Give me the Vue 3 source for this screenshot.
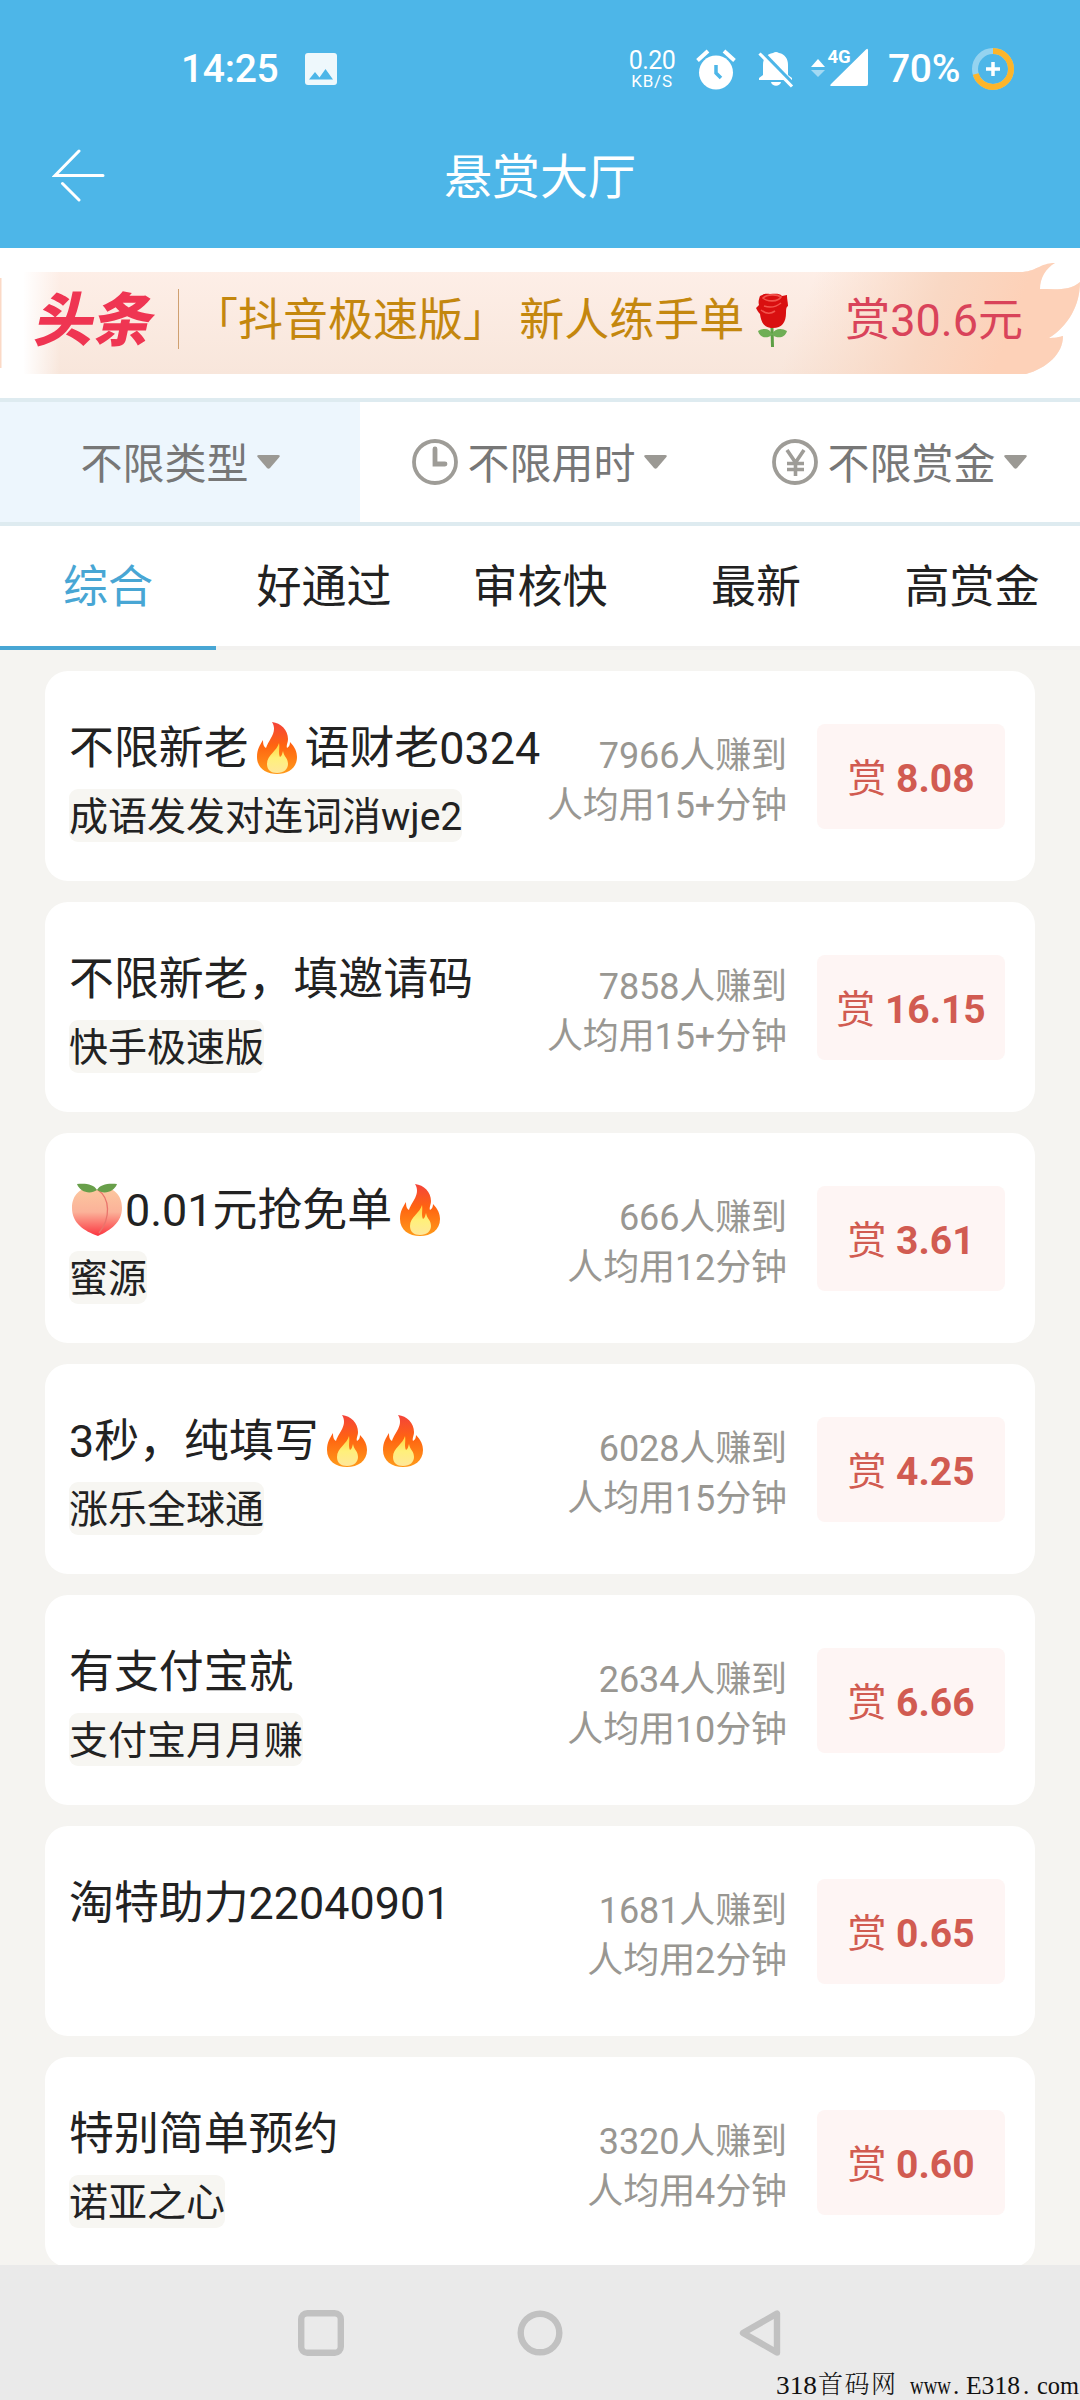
<script setup>
const filters = [
  { label: '不限类型', icon: '', active: true },
  { label: '不限用时', icon: 'clock' },
  { label: '不限赏金', icon: 'yen' },
]
const tabs = ['综合', '好通过', '审核快', '最新', '高赏金']
const tasks = [
  { title: ['不限新老', '@fire', '语财老0324'], sub: '成语发发对连词消wje2', count: '7966', time: '15+', price: '8.08' },
  { title: ['不限新老，填邀请码'], sub: '快手极速版', count: '7858', time: '15+', price: '16.15' },
  { title: ['@peach', '0.01元抢免单', '@fire'], sub: '蜜源', count: '666', time: '12', price: '3.61' },
  { title: ['3秒，纯填写', '@fire', '@fire'], sub: '涨乐全球通', count: '6028', time: '15', price: '4.25' },
  { title: ['有支付宝就'], sub: '支付宝月月赚', count: '2634', time: '10', price: '6.66' },
  { title: ['淘特助力22040901'], sub: '', count: '1681', time: '2', price: '0.65' },
  { title: ['特别简单预约'], sub: '诺亚之心', count: '3320', time: '4', price: '0.60' },
]
</script>

<template>
  <div class="screen">
    <svg class="defs" width="0" height="0" aria-hidden="true">
      <defs>
        <linearGradient id="fireOuter" x1="0" y1="0" x2="0" y2="1">
          <stop offset="0" stop-color="#f4433a" />
          <stop offset=".45" stop-color="#ff6411" />
          <stop offset="1" stop-color="#ff9a1a" />
        </linearGradient>
        <linearGradient id="fireInner" x1="0" y1="0" x2="0" y2="1">
          <stop offset="0" stop-color="#ffd23c" />
          <stop offset=".5" stop-color="#fff07a" />
          <stop offset="1" stop-color="#ffe79a" />
        </linearGradient>
        <linearGradient id="peachSkin" x1="0" y1="0" x2="0" y2="1">
          <stop offset="0" stop-color="#fcc8a0" />
          <stop offset=".5" stop-color="#fbb299" />
          <stop offset="1" stop-color="#fb3540" />
        </linearGradient>
        <symbol id="fire" viewBox="0 0 56 56">
          <path d="M23 2c9 1 16 8 16 17 0 4-2 6-1 9 2-1 3-3 3-6 5 5 7 10 7 15 0 11-9 17-20 17S8 48 8 37c0-8 3-12 6-17 0 5 1 7 3 8 3-9 12-16 6-26z" fill="url(#fireOuter)" />
          <path d="M30 23c-2 8-12 12-12 21 0 6 4 9 10 9 7 0 11-4 11-9 0-6-4-7-5-13-1 3-1 5-3 6-2-4 0-9-1-14z" fill="url(#fireInner)" />
        </symbol>
        <symbol id="peach" viewBox="0 0 56 56">
          <path d="M28 8c8-5 25-1 25 18 0 14-11 22-24 28C15 49 3 41 3 26 3 7 20 3 28 8z" fill="url(#peachSkin)" />
          <path d="M29 8c12 8 13 28 1 43" fill="none" stroke="#e9746c" stroke-width="1.300" />
          <path d="M28 8C21 13 11 10 8 2c8-1 17 0 20 6zM28 8c7 5 17 2 20-6-8-1-17 0-20 6z" fill="#689f4a" />
        </symbol>
        <symbol id="rose" viewBox="0 0 56 56">
          <path d="M26.500 36h3l.5 19h-3z" fill="#5d9f45" />
          <path d="M28 42c-2-6-9-6-14-3 2 7 9 8 14 4 6 4 13 3 15-4-5-3-12-3-15 3z" fill="#6fae55" />
          <path d="M16 4c5-3 7-2 10-2 5 0 9-1 12 2l5-1c0 5 1 7 1 11-2 1-2 4-2 7 0 9-4 15-13 15-10 0-12-7-13-14-2-2-3-4-4-6l3-3c-1-3 0-6 1-9z" fill="#d90f10" />
          <path d="M19 6c4-4 14-4 18-1-3 5-14 5-18 1zm1 8c6 2 12 1 17-3M17 18c5 4 10 4 14 1" fill="none" stroke="#f2544c" stroke-width="1.600" />
        </symbol>
        <symbol id="clock" viewBox="0 0 46 46">
          <circle cx="23" cy="23" r="21" fill="none" stroke="#9e9c97" stroke-width="3.800" />
          <path d="M23 10v15h10" fill="none" stroke="#9e9c97" stroke-width="4.800" stroke-linecap="round" />
        </symbol>
        <symbol id="yen" viewBox="0 0 46 46">
          <circle cx="23" cy="23" r="21" fill="none" stroke="#9e9c97" stroke-width="3.800" />
          <path d="M15 11l8.500 12.500L32 11M23.500 23v14M15 24.500h17M15 30.500h17" fill="none" stroke="#9e9c97" stroke-width="3.600" />
        </symbol>
      </defs>
    </svg>

    <header class="header">
      <div class="status">
        <span class="time">14:25</span>
        <svg class="pic" width="32" height="32" viewBox="0 0 32 32">
          <rect width="32" height="32" rx="3" fill="#eef8fc" />
          <path d="M4 26.500l6-7.500 4.500 5.500 6-8.500 7.500 10.500z" fill="#4db6e8" />
        </svg>
        <div class="speed"><b>0.20</b><i>KB/S</i></div>
        <svg class="alarm" width="40" height="41" viewBox="0 0 40 41">
          <circle cx="20" cy="23.500" r="17" fill="#fff" />
          <path d="M1.500 11.500L12 2M38.500 11.500L28 2" stroke="#fff" stroke-width="4" />
          <path d="M20 16v8l5 5" fill="none" stroke="#4db6e8" stroke-width="3.500" />
        </svg>
        <svg class="bell" width="36" height="37" viewBox="0 0 36 37">
          <path d="M5 24V14C5 7 9 3 15 2q3-2 6 0c6 1 9 6 9 12v10l4 3v2H1v-2z" fill="#fff" />
          <path d="M13 31h10c-1 5-9 5-10 0z" fill="#fff" />
          <path d="M3 0L36 34" stroke="#4db6e8" stroke-width="4" />
          <path d="M1.500 2.500L34 35.500" stroke="#fff" stroke-width="3.200" />
        </svg>
        <svg class="signal" width="58" height="42" viewBox="0 0 58 42">
          <path d="M0 19l7-8 7 8z" fill="#fff" />
          <path d="M0 22l7 7 7-7z" fill="#a3d9f3" />
          <path d="M55 1.500q2-2 2 1V36q0 2-2 2H21q-3 0-1-2z" fill="#fff" />
          <text x="16.500" y="15" font-size="18.500" font-weight="700" fill="#fff" stroke="#4db6e8" stroke-width="3" paint-order="stroke">4G</text>
        </svg>
        <span class="pct">70%</span>
        <svg class="battery" width="44" height="44" viewBox="0 0 44 44">
          <circle cx="22" cy="22" r="18" fill="none" stroke="#94d3f0" stroke-width="6" />
          <circle cx="22" cy="22" r="18" fill="none" stroke="#fdb52a" stroke-width="6" stroke-dasharray="79.200 113.100" transform="rotate(-90 22 22)" />
          <path d="M22 15v14M15 22h14" stroke="#fff" stroke-width="3.500" />
        </svg>
      </div>
      <div class="titlebar">
        <svg class="back" width="54" height="54" viewBox="0 0 54 54" fill="none" stroke="#fff" stroke-width="3" stroke-linecap="round">
          <path d="M27 3L3 27.500h48M10.500 35.500L27 52" />
        </svg>
        <h1>悬赏大厅</h1>
      </div>
    </header>

    <section class="banner">
      <svg class="ribbon" width="1080" height="150" viewBox="0 0 1080 150">
        <defs>
          <linearGradient id="ribV" x1="0" y1="0" x2="0" y2="1">
            <stop offset="0" stop-color="#feefe8" />
            <stop offset="1" stop-color="#f8e6db" />
          </linearGradient>
          <linearGradient id="ribFade" x1="0" x2="1" y1="0" y2="0">
            <stop offset="0" stop-color="#fff" />
            <stop offset="1" stop-color="#fff" stop-opacity="0" />
          </linearGradient>
          <linearGradient id="ribR" gradientUnits="userSpaceOnUse" x1="810" y1="40" x2="1000" y2="110">
            <stop offset="0" stop-color="#f9d8c4" stop-opacity="0" />
            <stop offset=".6" stop-color="#f9d8c4" />
            <stop offset="1" stop-color="#fdd1b8" />
          </linearGradient>
        </defs>
        <rect x="0" y="30" width="1.500" height="90" fill="#fbd9c6" />
        <path d="M24 24H1020C1036 24 1040 15 1055 15C1046 20 1040 30 1040 41C1056 41 1070 43 1080 34C1080 58 1068 78 1049 90C1054 90 1060 89 1063 88C1063 106 1047 120 1026 126H24z" fill="url(#ribV)" />
        <path d="M780 24H1020C1036 24 1040 15 1055 15C1046 20 1040 30 1040 41C1056 41 1070 43 1080 34C1080 58 1068 78 1049 90C1054 90 1060 89 1063 88C1063 106 1047 120 1026 126H780z" fill="url(#ribR)" />
        <rect x="23" y="22" width="37" height="106" fill="url(#ribFade)" />
      </svg>
      <div class="news">
        <strong class="logo">头条</strong>
        <span class="rule"></span>
        <span class="headline">「抖音极速版」 新人练手单<svg class="emoji"><use href="#rose" /></svg></span>
        <span class="bounty">赏30.6元</span>
      </div>
    </section>

    <nav class="filters">
      <div v-for="f in filters" :key="f.label" class="filter" :class="{ active: f.active }">
        <svg v-if="f.icon" class="ficon"><use :href="'#' + f.icon" /></svg>
        <span class="flabel">{{ f.label }}</span>
        <svg class="caret" width="23" height="14" viewBox="0 0 23 14"><path d="M2 0h19q3 0 1 2.500L13 13q-1.500 1.500-3 0L1 2.500Q-1 0 2 0z" fill="#9b9994" /></svg>
      </div>
    </nav>

    <nav class="tabs">
      <div v-for="(t, i) in tabs" :key="t" class="tab" :class="{ on: i === 0 }">{{ t }}</div>
    </nav>

    <main class="list">
      <article v-for="t in tasks" :key="t.title.join('')" class="card">
        <div class="info">
          <h2><template v-for="(p, i) in t.title" :key="i"><svg v-if="p[0] === '@'" class="emoji"><use :href="'#' + p.slice(1)" /></svg><template v-else>{{ p }}</template></template></h2>
          <span v-if="t.sub" class="sub">{{ t.sub }}</span>
        </div>
        <div class="meta">
          <div>{{ t.count }}人赚到</div>
          <div>人均用{{ t.time }}分钟</div>
        </div>
        <div class="price">赏 <b>{{ t.price }}</b></div>
      </article>
    </main>

    <footer class="navbar">
      <svg width="46" height="46" viewBox="0 0 46 46"><rect x="3.200" y="3.200" width="39.600" height="39.600" rx="6" fill="none" stroke="#c1c1c1" stroke-width="6.400" /></svg>
      <svg width="46" height="46" viewBox="0 0 46 46"><circle cx="23" cy="23" r="19.300" fill="none" stroke="#c1c1c1" stroke-width="6.400" /></svg>
      <svg width="46" height="46" viewBox="0 0 46 46"><path d="M41 3.500v39L7 23z" fill="none" stroke="#c1c1c1" stroke-width="6.400" stroke-linejoin="round" /></svg>
      <svg class="mark" width="304" height="36" viewBox="0 0 304 36" fill="#111">
        <text x="0" y="30" textLength="41" lengthAdjust="spacingAndGlyphs">318</text>
        <text x="42" y="29" textLength="78" class="cjk">首码网</text>
        <text x="134" y="30" textLength="41" lengthAdjust="spacingAndGlyphs">www</text>
        <text x="177" y="30">.</text>
        <text x="190" y="30" textLength="54" lengthAdjust="spacingAndGlyphs">E318</text>
        <text x="247" y="30">.</text>
        <text x="261" y="30" textLength="42" lengthAdjust="spacingAndGlyphs">com</text>
      </svg>
    </footer>
  </div>
</template>

<style>
body { margin: 0; }
</style>

<style scoped>
.screen { width: 1080px; height: 2400px; display: flex; flex-direction: column; overflow: hidden; background: #f5f4f1; font-family: Roboto, "Noto Sans CJK SC", sans-serif; color: #222; }
.defs { position: absolute; }
h1, h2 { margin: 0; font-weight: 400; }
.header { flex: none; height: 248px; background: #4db6e8; color: #fff; display: flex; flex-direction: column; }
.status { height: 104px; padding: 34px 65px 0 181px; box-sizing: border-box; display: flex; align-items: center; font-weight: 500; font-size: 39px; }
.time { width: 124px; letter-spacing: -.3px; }
.pic { margin-right: auto; }
.speed { display: flex; flex-direction: column; align-items: center; width: 48px; line-height: 1; font-weight: 400; }
.speed b { font-weight: 400; font-size: 25px; line-height: 24px; letter-spacing: -.6px; }
.speed i { font-style: normal; font-size: 17px; line-height: 17px; letter-spacing: .8px; }
.alarm { margin-left: 20px; }
.bell { margin-left: 22px; }
.signal { margin-left: 17px; overflow: visible; }
.pct { margin-left: 19px; width: 74px; letter-spacing: -.3px; }
.battery { margin-left: 9px; }
.titlebar { height: 144px; display: grid; grid-template-columns: 130px 1fr 130px; align-items: center; }
.back { margin: -2px 0 0 52px; }
h1 { font-size: 48px; line-height: 64px; text-align: center; padding-top: 3px; }
.banner { flex: none; height: 150px; background: #fff; display: grid; }
.ribbon, .news { grid-area: 1 / 1; }
.news { display: flex; align-items: center; height: 142px; font-size: 45px; white-space: nowrap; }
.logo { width: 118px; margin: -7px 0 0 39px; font-family: "Noto Sans CJK SC", sans-serif; font-weight: 900; font-size: 58px; line-height: 60px; color: #ef3552; transform: skewX(-12deg) scaleX(1.02); }
.rule { width: 1px; height: 60px; margin-left: 21px; background: #cfa070; }
.headline { margin: -5px 0 0 14px; color: #c4870e; }
.bounty { margin: -5px 57px 0 auto; color: #d9435a; }
.emoji { width: 56px; height: 56px; vertical-align: -12px; }
.filters { flex: none; height: 120px; display: grid; grid-template-columns: repeat(3, 1fr); border: solid #deebf0; border-width: 4px 0; background: #fff; }
.filter { display: flex; align-items: center; justify-content: center; font-size: 42px; color: #777; }
.flabel { margin-top: -4px; }
.filter.active { background: #edf6fd; }
.ficon { width: 46px; height: 46px; margin: -1px 9px 0 -1px; }
.caret { margin-left: 8px; }
.tabs { flex: none; height: 124px; display: grid; grid-template-columns: repeat(5, 1fr); background: #fff; font-size: 45px; }
.tab { display: flex; align-items: center; justify-content: center; padding-bottom: 6px; border-bottom: 4px solid #f2f1ef; }
.tab.on { color: #48a6d4; border-color: #48a6d4; }
.list { height: 1615px; box-sizing: border-box; padding: 21px 45px 0; display: flex; flex-direction: column; gap: 21px; overflow: hidden; }
.card { flex: none; height: 210px; box-sizing: border-box; padding: 0 30px 0 24px; border-radius: 23px; background: #fff; display: flex; align-items: center; }
.info { flex: 1; align-self: stretch; padding-top: 48px; white-space: nowrap; }
h2 { font-size: 44.900px; line-height: 60px; height: 60px; }
.sub { display: inline-block; box-sizing: border-box; margin-top: 10px; height: 53px; padding-top: 3px; line-height: 51px; font-size: 39px; border-radius: 9px; background: #f7f6f2; }
.meta { padding-top: 10px; text-align: right; font-size: 36px; line-height: 50px; color: #999792; letter-spacing: -.1px; }
.price { width: 188px; height: 105px; box-sizing: border-box; padding-top: 3px; margin-left: 30px; border-radius: 8px; background: #fef5f4; color: #d15b51; font-size: 39px; line-height: 105px; text-align: center; }
.navbar { flex: none; height: 135px; background: #eaeaea; display: flex; justify-content: center; gap: 173px; padding-top: 45px; box-sizing: border-box; position: relative; }
.mark { position: absolute; right: 0; bottom: 0; font: 25px "Liberation Serif", serif; }
.cjk { font-family: "Noto Serif CJK SC", "Noto Sans CJK SC", serif; font-size: 25px; font-weight: 300; }
</style>
